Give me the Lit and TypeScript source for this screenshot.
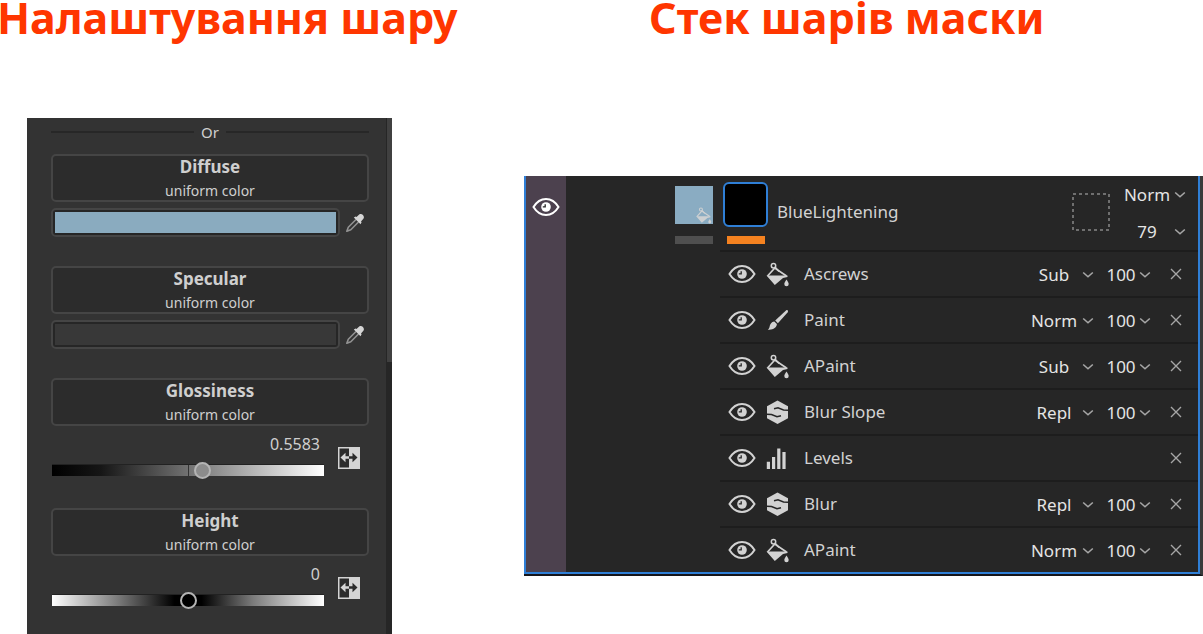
import { LitElement, html, svg, css, nothing } from "lit";
import { customElement, property } from "lit/decorators.js";

const eye = html`<svg viewBox="0 0 28 20" width="28" height="20" aria-hidden="true">
  <path d="M1.500 10C4.800 4.600 9 2 14 2S23.200 4.600 26.500 10C23.200 15.400 19 18 14 18S4.800 15.400 1.500 10Z" fill="none" stroke="currentColor" stroke-width="2"/>
  <circle cx="14" cy="10" r="4.800" fill="currentColor"/>
  <path d="M13.200 7.200V9.800H10.800" fill="none" stroke="#262626" stroke-width="1.300"/>
</svg>`;

const bucketShape = svg`
  <path d="M1.500 14 8.800 6 20.500 14" fill="none" stroke="currentColor" stroke-width="1.700"/>
  <circle cx="7.500" cy="3.800" r="2.200" fill="none" stroke="currentColor" stroke-width="1.500"/>
  <path d="M9 5 13 9.500" fill="none" stroke="currentColor" stroke-width="1.500"/>
  <path d="M.5 13.500H21.500V15L17 16 8.800 23Z" fill="currentColor"/>
  <path d="M20.500 17.500C21.600 19.400 22.700 20.500 22.700 22A2.200 2.200 0 0 1 18.300 22C18.300 20.500 19.400 19.400 20.500 17.500Z" fill="currentColor"/>`;

const icons: Record<string, unknown> = {
  fill: html`<svg viewBox="0 0 24 25" width="24" height="25" aria-hidden="true">${bucketShape}</svg>`,
  brush: html`<svg viewBox="0 0 24 25" width="24" height="25" aria-hidden="true">
    <path d="M21.800 2.200 20.500 1.900 9.200 12.400 11.900 15.200 22 4Z" fill="currentColor"/>
    <path d="M8.300 13.400 10.900 16.100C10.700 19.800 7 22.300 1.800 21.700 4 20.200 3.200 18.400 4.400 16.200 5.300 14.500 6.700 13.600 8.300 13.400Z" fill="currentColor"/>
  </svg>`,
  substance: html`<svg viewBox="0 0 24 25" width="24" height="25" aria-hidden="true">
    <path d="M11.500.5 22 6.300V18.200L11.500 24 1 18.200V6.300Z" fill="currentColor"/>
    <path d="M22.500 10.200 17.500 10 12 7.800 8 8.800M.5 14.300 5.500 14.500 11 16.700 15 15.700" fill="none" stroke="#262626" stroke-width="1.500"/>
  </svg>`,
  levels: html`<svg viewBox="0 0 24 25" width="24" height="25" aria-hidden="true">
    <path d="M.8 15.800H4V23H.8ZM6 11H9.200V23H6ZM11.200 2.500H14.400V23H11.200ZM16.400 6H19.600V23H16.400Z" fill="currentColor"/>
  </svg>`,
};

const chevron = html`<svg class="chevron" viewBox="0 0 12 8" width="12" height="8" aria-hidden="true">
  <path d="M1.200 1.500 6 5.800 10.800 1.500" fill="none" stroke="#a6a6a6" stroke-width="1.600"/>
</svg>`;

@customElement("pick-list")
class PickList extends LitElement {
  @property() value = "";
  @property() label = "";
  @property({ attribute: false }) options: string[] = [];

  static styles = css`
    :host { display: grid; align-items: center; }
    .select {
      grid-area: 1 / 1; width: 100%; appearance: none; border: 0; margin: 0;
      padding: 0 12px 0 0; background: transparent; color: #e4e4e4;
      font: 17px/24px "Noto Sans", sans-serif; text-align: center; text-align-last: center;
    }
    .select option { color: #e4e4e4; background: #262626; }
    .chevron { grid-area: 1 / 1; justify-self: end; pointer-events: none; }
  `;

  render() {
    const all = this.options.includes(this.value) ? this.options : [this.value, ...this.options];
    return html`<select class="select" aria-label=${this.label}>
        ${all.map((o) => html`<option ?selected=${o === this.value}>${o}</option>`)}
      </select>${chevron}`;
  }
}

const MODES = ["Norm", "Sub", "Repl"];
const AMOUNTS = ["100", "75", "50", "25", "0"];

interface Effect { name: string; icon: string; mode?: string; amount?: string }

const EFFECTS: Effect[] = [
  { name: "Ascrews", icon: "fill", mode: "Sub", amount: "100" },
  { name: "Paint", icon: "brush", mode: "Norm", amount: "100" },
  { name: "APaint", icon: "fill", mode: "Sub", amount: "100" },
  { name: "Blur Slope", icon: "substance", mode: "Repl", amount: "100" },
  { name: "Levels", icon: "levels" },
  { name: "Blur", icon: "substance", mode: "Repl", amount: "100" },
  { name: "APaint", icon: "fill", mode: "Norm", amount: "100" },
];

@customElement("mask-stack")
class MaskStack extends LitElement {
  static styles = css`
    :host {
      display: block; background: #262626; color: #d2d2d2; border-right: 3px solid #3a3a3a;
      border-bottom: 2px solid #15151a; font: 17px/24px "Noto Sans", sans-serif;
    }
    .frame { display: grid; grid-template-columns: 40px 1fr; border: 2px solid #2f7fd6; border-top: 0; }
    .rail { background: #4c414e; display: flex; justify-content: center; align-items: flex-start; padding-top: 21px; }
    .button { appearance: none; border: 0; background: none; padding: 0; margin: 0; color: inherit; display: flex; align-items: center; justify-content: center; }
    .bright { color: #fff; }
    .layer { display: flex; height: 74px; padding: 0 12px 0 109px; }
    .thumb { display: flex; flex-direction: column; align-items: center; justify-content: flex-end; gap: 12px; width: 38px; padding-bottom: 6px; box-sizing: border-box; }
    .mask { width: 45px; margin-left: 10px; gap: 9px; }
    .swatch { width: 38px; height: 38px; background: #8aacc2; color: #cdd0d2; display: flex; align-items: flex-end; justify-content: flex-end; }
    .black { width: 41px; height: 41px; background: #000; border: 2px solid #2f7fd6; border-radius: 6px; }
    .bar { width: 38px; height: 8px; background: #4f4f4f; }
    .orange { background: #f58220; }
    .title { flex: 1; padding: 24px 0 0 9px; }
    .empty { margin: 17px 10px 0 0; }
    .blend { display: grid; grid-template-rows: 1fr 1fr; width: 66px; }
    .list { list-style: none; margin: 0 0 0 154px; padding: 0; }
    .row { display: flex; align-items: center; height: 46px; box-sizing: border-box; border-top: 2px solid #1d1d1d; padding: 0 12px 0 8px; }
    .kind { display: flex; margin: 0 14px 0 10px; }
    .name { flex: 1; }
    .mode { width: 68px; margin-right: 9px; padding-top: 2px; }
    .amount { width: 48px; margin-right: 15px; padding-top: 2px; }
    .close { width: 20px; height: 20px; }
  `;

  render() {
    return html`<div class="frame">
      <div class="rail"><button class="button bright" aria-label="Layer visibility">${eye}</button></div>
      <div>
        <div class="layer">
          <div class="thumb">
            <div class="swatch"><svg viewBox="0 0 24 25" width="18" height="17" aria-hidden="true">${bucketShape}</svg></div>
            <div class="bar"></div>
          </div>
          <div class="thumb mask"><div class="black"></div><div class="bar orange"></div></div>
          <div class="title">BlueLightening</div>
          <svg class="empty" viewBox="0 0 38 38" width="38" height="38" aria-hidden="true">
            <rect x="1" y="1" width="36" height="36" fill="none" stroke="#888" stroke-width="1.500" stroke-dasharray="3 3"/>
          </svg>
          <div class="blend">
            <pick-list label="Blending mode" value="Norm" .options=${MODES}></pick-list>
            <pick-list label="Opacity" value="79" .options=${AMOUNTS}></pick-list>
          </div>
        </div>
        <ul class="list">
          ${EFFECTS.map((e) => html`<li class="row">
            <button class="button" aria-label="Toggle ${e.name}">${eye}</button>
            <span class="kind">${icons[e.icon]}</span>
            <span class="name">${e.name}</span>
            ${e.mode ? html`
              <pick-list class="mode" label="${e.name} mode" .value=${e.mode} .options=${MODES}></pick-list>
              <pick-list class="amount" label="${e.name} opacity" .value=${e.amount!} .options=${AMOUNTS}></pick-list>` : nothing}
            <button class="button close" aria-label="Remove ${e.name}">
              <svg viewBox="0 0 12 12" width="12" height="12" aria-hidden="true"><path d="M1 1 11 11M11 1 1 11" stroke="#a6a6a6" stroke-width="1.400"/></svg>
            </button>
          </li>`)}
        </ul>
      </div>
    </div>`;
  }
}

@customElement("layer-settings")
class LayerSettings extends LitElement {
  static styles = css`
    :host {
      display: grid; grid-template-columns: 1fr 6px; background: #333; color: #cfcfcf;
      font: 15px/25px "Noto Sans", sans-serif;
    }
    .body { padding: 0 17px 24px 24px; }
    .or { display: flex; align-items: center; gap: 6px; height: 28px; margin-bottom: 8px; }
    .or::before, .or::after { content: ""; flex: 1; height: 2px; background: #272727; }
    .or-text { width: 20px; text-align: center; }
    .source {
      display: block; width: 100%; height: 48px; box-sizing: border-box; margin: 0; padding: 0;
      border: 2px solid #454545; border-radius: 5px; background: #2c2c2c; color: inherit;
      font: inherit; text-align: center;
    }
    .strong { display: block; font-size: 17px; font-weight: 700; line-height: 22px; }
    .uniform { display: block; font-size: 14px; line-height: 18px; margin-top: 4px; }
    .color { display: grid; grid-template-columns: 1fr 20px; align-items: center; gap: 5px; margin: 6px 4px 29px 0; }
    .well {
      appearance: none; width: 100%; height: 29px; box-sizing: border-box; margin: 0; padding: 2px;
      border: 2px solid #454545; border-radius: 5px; background: #262626;
    }
    .well::-webkit-color-swatch-wrapper { padding: 0; }
    .well::-webkit-color-swatch { border: 0; border-radius: 0; }
    .icon { appearance: none; border: 0; background: none; padding: 0; margin: 0; display: flex; }
    .amount { display: grid; grid-template-columns: 1fr 22px; gap: 14px; align-items: center; margin: 5px 9px 24px 1px; height: 53px; }
    .last { margin-bottom: 0; }
    .control { display: flex; flex-direction: column; }
    .value { text-align: right; font-size: 16px; line-height: 24px; padding-right: 4px; }
    .range { appearance: none; width: 100%; height: 27px; margin: 0; background: none; }
    .range::-webkit-slider-runnable-track { height: 12px; border-top: 1px solid #222; box-sizing: border-box; }
    .gloss::-webkit-slider-runnable-track {
      background: linear-gradient(#333, #333) 50% 0 / 1px 100% no-repeat,
        linear-gradient(90deg, #000, #161616 18%, #6c6c6c 48%, #fff);
    }
    .height::-webkit-slider-runnable-track { background: linear-gradient(90deg, #fff, #7c7c7c 24%, #000 45%, #000 55%, #7c7c7c 74%, #fff); }
    .range::-webkit-slider-thumb {
      appearance: none; width: 17px; height: 17px; margin-top: -3px; box-sizing: border-box;
      border: 2px solid #b4b4b4; border-radius: 50%; background: #8c8c8c;
    }
    .height::-webkit-slider-thumb { background: #000; }
    .scroll { background: #262626; border-left: 1px solid #262626; }
    .grip { height: 244px; background: #404040; }
  `;

  private source(name: string) {
    return html`<button class="source"><span class="strong">${name}</span><span class="uniform">uniform color</span></button>`;
  }

  private color(name: string, value: string) {
    return html`${this.source(name)}
      <div class="color">
        <input class="well" type="color" aria-label="${name} color" .value=${value}>
        <button class="icon" aria-label="Pick ${name} color">
          <svg viewBox="0 0 20 20" width="20" height="20" aria-hidden="true">
            <path d="M11 6.500 3.300 14.200 1.800 18.200 5.800 16.700 13.500 9" fill="none" stroke="#929292" stroke-width="1.600" stroke-linejoin="round"/>
            <path d="M8.800 4.500 15.500 11.200 16.600 9.300 16 8.500 18.400 5.800C20.200 3.200 16.800-.2 14.200 1.600L11.500 4 10.700 3.400Z" fill="#d6d6d6"/>
          </svg>
        </button>
      </div>`;
  }

  private slider(name: string, kind: string, value: number, min: number, last = false) {
    return html`${this.source(name)}
      <div class="amount ${last ? "last" : ""}">
        <div class="control">
          <output class="value" for=${kind}>${value}</output>
          <input class="range ${kind}" id=${kind} aria-label=${name} type="range" min=${min} max="1" step="0.0001" .value=${String(value)}>
        </div>
        <button class="icon" aria-label="Reset ${name}">
          <svg viewBox="0 0 22 22" width="22" height="22" aria-hidden="true">
            <path d="M0 0H22V22H0Z" fill="#d4d4d4"/>
            <path d="M1.500 1.500H11V20.500H1.500Z" fill="#2b2b2b"/>
            <path d="M2.500 10.500 7.500 5.800V9.300H11V11.700H7.500V15.200Z" fill="#d4d4d4"/>
            <path d="M19.500 10.500 14.500 5.800V9.300H11V11.700H14.500V15.200Z" fill="#2b2b2b"/>
          </svg>
        </button>
      </div>`;
  }

  render() {
    return html`<div class="body">
        <div class="or"><span class="or-text">Or</span></div>
        ${this.color("Diffuse", "#8aabbf")}
        ${this.color("Specular", "#383838")}
        ${this.slider("Glossiness", "gloss", 0.5583, 0)}
        ${this.slider("Height", "height", 0, -1, true)}
      </div>
      <div class="scroll"><div class="grip"></div></div>`;
  }
}

@customElement("app-root")
class AppRoot extends LitElement {
  static styles = css`
    :host { display: grid; grid-template-columns: 524fr 679fr; align-items: start; background: #fff; }
    .heading { margin: 0; color: #ff3600; font: 700 43px/36px "Noto Sans", sans-serif; white-space: nowrap; }
    .left .heading { margin-left: -3px; }
    .right .heading { padding-left: 125px; }
    .settings { margin: 82px 132px 0 27px; }
    .stack { margin-top: 140px; }
  `;

  render() {
    return html`
      <section class="left">
        <h1 class="heading">Налаштування шару</h1>
        <layer-settings class="settings"></layer-settings>
      </section>
      <section class="right">
        <h1 class="heading">Стек шарів маски</h1>
        <mask-stack class="stack"></mask-stack>
      </section>`;
  }
}
